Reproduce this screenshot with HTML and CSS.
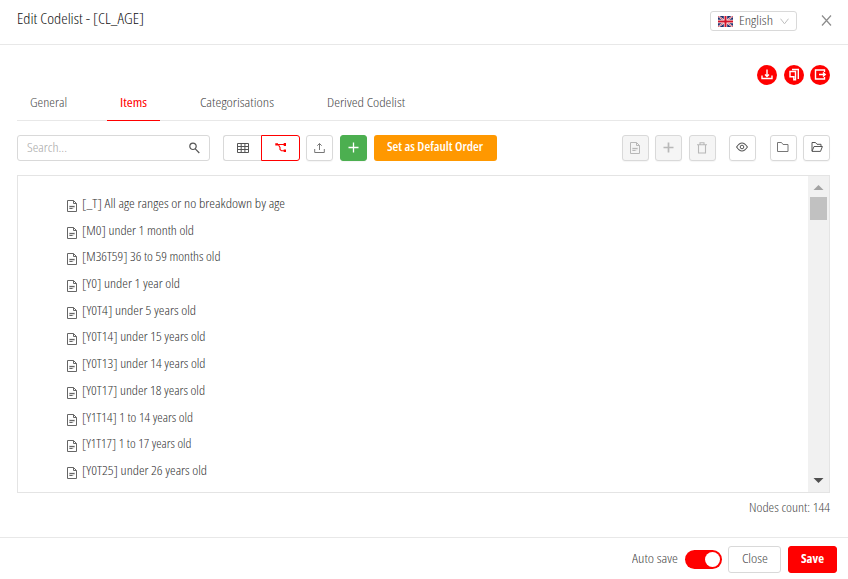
FILE: index.html
```html
<!DOCTYPE html>
<html lang="en">
<head>
<meta charset="utf-8">
<title>Edit Codelist</title>
<link rel="stylesheet" href="styles.css">
</head>
<body>
<svg width="0" height="0" class="defs" aria-hidden="true">
  <symbol id="file" viewBox="0 0 11 13"><path d="M.5 1.500H6.500L9.500 4.500V12.500H.5Z M6.500 1.500V4.500H9.500 M2.500 7.500H7.500 M2.500 9.500H5.500" fill="none" stroke="currentColor"/><path d="M2 6.500H8V8.500L6 10H2Z" fill="currentColor" opacity=".25"/></symbol>
  <symbol id="folder" viewBox="0 0 12 10"><path d="M.5 .5H4.500L6 2.500H11V9.500H.5Z" fill="none" stroke="currentColor"/></symbol>
</svg>
<div class="dialog">
  <header class="header">
    <h1 class="title"><span class="t" data-w="127">Edit Codelist - [CL_AGE]</span></h1>
    <div class="lang">
      <svg width="15" height="11" viewBox="0 0 15 11"><path fill="#20306d" d="M0 0H15V11H0Z"/><path d="M0 0L15 11M15 0L0 11" stroke="#fff" stroke-width="1.800"/><path d="M0 0L15 11M15 0L0 11" stroke="#d62a3c" stroke-width=".8"/><path d="M7.500 0V11M0 5.500H15" stroke="#fff" stroke-width="3.400"/><path d="M7.500 0V11M0 5.500H15" stroke="#d2142b" stroke-width="2"/></svg>
      <span class="t" data-w="34">English</span>
      <svg width="9" height="7" viewBox="0 0 9 7"><path d="M.5 .7L4.500 5.800L8.500 .7" fill="none" stroke="#bfbfbf"/></svg>
    </div>
    <svg class="x" width="11" height="11" viewBox="0 0 11 11"><path d="M1 .5L10 10.500M10 .5L1 10.500" stroke="#8c8c8c" stroke-width="1.200"/></svg>
  </header>
  <main class="body">
    <div class="actions">
      <span class="circle"><svg width="14" height="14" viewBox="0 0 14 14"><path d="M7 1.500V8M5 6.500L7 8.500L9 6.500M2 7.500V10.500H12V7.500" /></svg></span>
      <span class="circle"><svg width="14" height="14" viewBox="0 0 14 14"><path d="M5 1.500H11.300V11M3 3.500H8.500V11.800H6.800V8.800H3Z"/></svg></span>
      <span class="circle"><svg width="14" height="14" viewBox="0 0 14 14"><path d="M11.500 4V2H2.500V11H11.500V9M6 6.500H12M10 4.500L12.200 6.500L10 8.500"/></svg></span>
    </div>
    <nav class="tabs">
      <span class="tab"><span class="t" data-w="37">General</span></span>
      <span class="tab active"><span class="t" data-w="27">Items</span></span>
      <span class="tab"><span class="t" data-w="74">Categorisations</span></span>
      <span class="tab"><span class="t" data-w="78">Derived Codelist</span></span>
    </nav>
    <div class="toolbar">
      <div class="search"><span class="t" data-w="40">Search...</span><svg width="11" height="12" viewBox="0 0 11 12"><path d="M7.200 4.300A3.200 3.200 0 1 1 .8 4.300A3.200 3.200 0 1 1 7.200 4.300M6.300 6.800L10.300 11" fill="none" stroke="#555" stroke-width="1.200"/></svg></div>
      <div class="group">
        <span class="seg"><svg width="12" height="10" viewBox="0 0 12 10"><path d="M.5 .5H11.500V9.500H.5ZM0 3.500H12M0 6.500H12M4.200 0V10M7.900 0V10" fill="none" stroke="#555"/></svg></span>
        <span class="seg on"><svg width="12" height="10" viewBox="0 0 12 10"><path d="M1 1.500H10M3.500 2L5 4.500V6.500L6.500 7.800H10" fill="none" stroke="red" stroke-width="1.100"/><path d="M.3 .3H3V2.500H.3ZM8.700 0H11V3H8.700ZM8.700 6.500H11V9H8.700Z" fill="red"/></svg></span>
      </div>
      <span class="btn upload"><svg width="11" height="11" viewBox="0 0 11 11"><path d="M5.500 8V1.500M3.300 3.700L5.500 1.500L7.700 3.700M.7 7V10.500H10.300V7" fill="none" stroke="#777"/></svg></span>
      <span class="btn green"><svg width="11" height="11" viewBox="0 0 11 11"><path d="M5.500 .5V10.500M.5 5.500H10.500" stroke="#fff" stroke-width="1.300"/></svg></span>
      <span class="order"><span class="t" data-w="96">Set as Default Order</span></span>
      <span class="btn off first"><svg class="fileicon"><use href="#file"/></svg></span>
      <span class="btn off"><svg width="11" height="11" viewBox="0 0 11 11"><path d="M5.500 .5V10.500M.5 5.500H10.500" stroke="currentColor" stroke-width="1.700"/></svg></span>
      <span class="btn off"><svg width="10" height="12" viewBox="0 0 10 12"><path d="M0 2.700H10M3 2.500V.7H7V2.500M1.500 3V11H8.500V3" fill="none" stroke="currentColor" stroke-width="1.100"/></svg></span>
      <span class="btn eye"><svg width="12" height="10" viewBox="0 0 12 10"><path d="M.6 5Q6-3 11.400 5Q6 13 .6 5Z" fill="none" stroke="#555" stroke-width="1.100"/><circle cx="6" cy="5" r="1.800" fill="none" stroke="#555"/></svg></span>
      <span class="btn dir"><svg width="12" height="10"><use href="#folder"/></svg></span>
      <span class="btn last"><svg width="12" height="10" viewBox="0 0 12 10"><path d="M1 9V.5H4.500L6 2.300H10V4.500M1 9.300L3 4.500H11.400L9.500 9.400H1" fill="none" stroke="#555"/></svg></span>
    </div>
    <div class="list">
      <ul class="rows">
        <li><svg class="fileicon"><use href="#file"/></svg><span class="t" data-w="203">[_T] All age ranges or no breakdown by age</span></li>
        <li><svg class="fileicon"><use href="#file"/></svg><span class="t" data-w="112">[M0] under 1 month old</span></li>
        <li><svg class="fileicon"><use href="#file"/></svg><span class="t" data-w="138.500">[M36T59] 36 to 59 months old</span></li>
        <li><svg class="fileicon"><use href="#file"/></svg><span class="t" data-w="98">[Y0] under 1 year old</span></li>
        <li><svg class="fileicon"><use href="#file"/></svg><span class="t" data-w="114">[Y0T4] under 5 years old</span></li>
        <li><svg class="fileicon"><use href="#file"/></svg><span class="t" data-w="123.500">[Y0T14] under 15 years old</span></li>
        <li><svg class="fileicon"><use href="#file"/></svg><span class="t" data-w="123.500">[Y0T13] under 14 years old</span></li>
        <li><svg class="fileicon"><use href="#file"/></svg><span class="t" data-w="123">[Y0T17] under 18 years old</span></li>
        <li><svg class="fileicon"><use href="#file"/></svg><span class="t" data-w="111">[Y1T14] 1 to 14 years old</span></li>
        <li><svg class="fileicon"><use href="#file"/></svg><span class="t" data-w="109.500">[Y1T17] 1 to 17 years old</span></li>
        <li><svg class="fileicon"><use href="#file"/></svg><span class="t" data-w="125">[Y0T25] under 26 years old</span></li>
      </ul>
      <div class="scroll">
        <svg width="11" height="5" viewBox="0 0 11 5"><path d="M.5 5L5.500 0L10.500 5Z" fill="#a3a3a3"/></svg>
        <span class="thumb"></span>
        <svg class="down" width="11" height="5" viewBox="0 0 11 5"><path d="M.5 0L5.500 5L10.500 0Z" fill="#505050"/></svg>
      </div>
    </div>
    <div class="count"><span class="t" data-w="81">Nodes count: 144</span></div>
  </main>
  <footer class="footer">
    <span class="t" data-w="46">Auto save</span>
    <span class="switch"><span class="knob"></span></span>
    <span class="fbtn"><span class="t" data-w="26">Close</span></span>
    <span class="fbtn save"><span class="t" data-w="23">Save</span></span>
  </footer>
</div>
<script src="fit.js"></script>
</body>
</html>
```
FILE: styles.css
```css
* { box-sizing: border-box; }
body { margin: 0; background: #fff; color: #4a4a4a; font: 360 12.300px/16px "Open Sans", "Noto Sans", sans-serif; font-stretch: 75%; overflow: hidden; }
svg { display: block; flex: none; }
.defs { display: none; }
.t { display: inline-block; white-space: nowrap; flex: none; }
.t > span { display: inline-block; transform-origin: 0 50%; }
.dialog { width: 848px; height: 579px; display: flex; flex-direction: column; }
.header { height: 45px; border-bottom: 1px solid #e8e8e8; display: flex; align-items: flex-start; padding: 11px 16px 0 17px; }
.title { margin: -1px auto 0 0; font-size: 14.300px; line-height: 18px; font-weight: 360; color: #111; }
.lang { width: 87px; height: 20px; border: 1px solid #d9d9d9; border-radius: 3px; display: flex; align-items: center; padding-left: 7px; }
.lang .t { margin: 0 7px 0 6px; }
.x { margin: 4px 0 0 24px; }
.body { height: 492px; padding: 20px 18px 0 17px; }
.actions { display: flex; justify-content: flex-end; gap: 6.500px; height: 20px; }
.circle { width: 20px; height: 20px; border-radius: 50%; background: red; display: flex; align-items: center; justify-content: center; }
.circle path { fill: none; stroke: #fff; stroke-width: 1.400; }
.tabs { height: 36px; border-bottom: 1px solid #e8e8e8; display: flex; gap: 27px; }
.tab { height: 36px; padding: 10px 13px 0; }
.tab.active { color: red; font-weight: 400; border-bottom: 1px solid red; }
.toolbar { margin-top: 14px; height: 26px; display: flex; }
.search { width: 193px; border: 1px solid #d9d9d9; border-radius: 3px; display: flex; align-items: center; justify-content: space-between; padding: 0 9px; color: #a8a8a8; }
.group { width: 77px; margin-left: 13px; display: flex; }
.seg { width: 38px; border: 1px solid #d9d9d9; border-right: 0; border-radius: 3px 0 0 3px; display: flex; align-items: center; justify-content: center; }
.seg svg { margin-bottom: 1px; }
.seg.on { width: 39px; border: 1px solid red; border-radius: 0 3px 3px 0; }
.btn { width: 27px; margin-left: 6.500px; border: 1px solid #d9d9d9; border-radius: 3px; display: flex; align-items: center; justify-content: center; box-shadow: 0 1px 1px rgba(0,0,0,.04); color: #777; }
.upload { margin-left: 6px; }
.upload svg { margin-bottom: 2px; }
.btn.green { margin-left: 7px; background: #4caf50; border-color: #4caf50; }
.green svg { margin-bottom: 1px; }
.order { width: 123px; margin-left: 7px; background: #ff9800; color: #fff; font-weight: 600; border-radius: 3px; display: flex; padding: 4px 0 0 13px; }
.off { background: #f5f5f5; color: #b8b8b8; }
.btn.first { margin-left: auto; }
.eye { margin-left: 13px; }
.dir { margin-left: 14px; }
.btn .fileicon, .btn.off svg { margin-bottom: 1px; }
.eye svg, .dir svg, .last svg { margin-bottom: 2px; }
.fileicon { width: 11px; height: 13px; }
.list { margin-top: 14px; height: 318px; border: 1px solid #e4e4e4; display: flex; justify-content: space-between; }
.rows { list-style: none; margin: 0; padding: 15px 0 0 49px; }
.rows li { height: 26.700px; display: flex; padding-top: 5px; gap: 4px; color: #333; }
.rows .fileicon { margin-top: 3px; color: #666; }
.scroll { width: 21px; background: #f1f1f1; display: flex; flex-direction: column; align-items: center; padding: 9px 0; }
.thumb { width: 17px; height: 23px; margin-top: 7px; background: #c1c1c1; }
.down { margin-top: auto; }
.count { margin-top: 7px; display: flex; justify-content: flex-end; }
.footer { height: 42px; border-top: 1px solid #e8e8e8; display: flex; align-items: center; justify-content: flex-end; padding: 2px 11px 0 0; }
.switch { width: 37px; height: 19px; margin: 0 6px 0 7px; border-radius: 10px; background: red; display: flex; align-items: center; justify-content: flex-end; padding-right: 2px; }
.knob { width: 15px; height: 15px; border-radius: 50%; background: #fff; }
.fbtn { width: 53px; height: 27px; border: 1px solid #d9d9d9; border-radius: 3px; display: flex; align-items: center; justify-content: center; }
.save { width: 49px; margin-left: 7px; background: red; border-color: red; color: #fff; font-weight: 700; }
.footer .t { margin-top: -1px; }
```
FILE: fit.js
```js
document.querySelectorAll('.t').forEach(function (el) {
  var inner = document.createElement('span');
  inner.textContent = el.textContent;
  el.textContent = '';
  el.appendChild(inner);
  var natural = inner.getBoundingClientRect().width;
  var width = parseFloat(el.dataset.w);
  el.style.width = width + 'px';
  inner.style.transform = 'scaleX(' + width / natural + ')';
});
```
